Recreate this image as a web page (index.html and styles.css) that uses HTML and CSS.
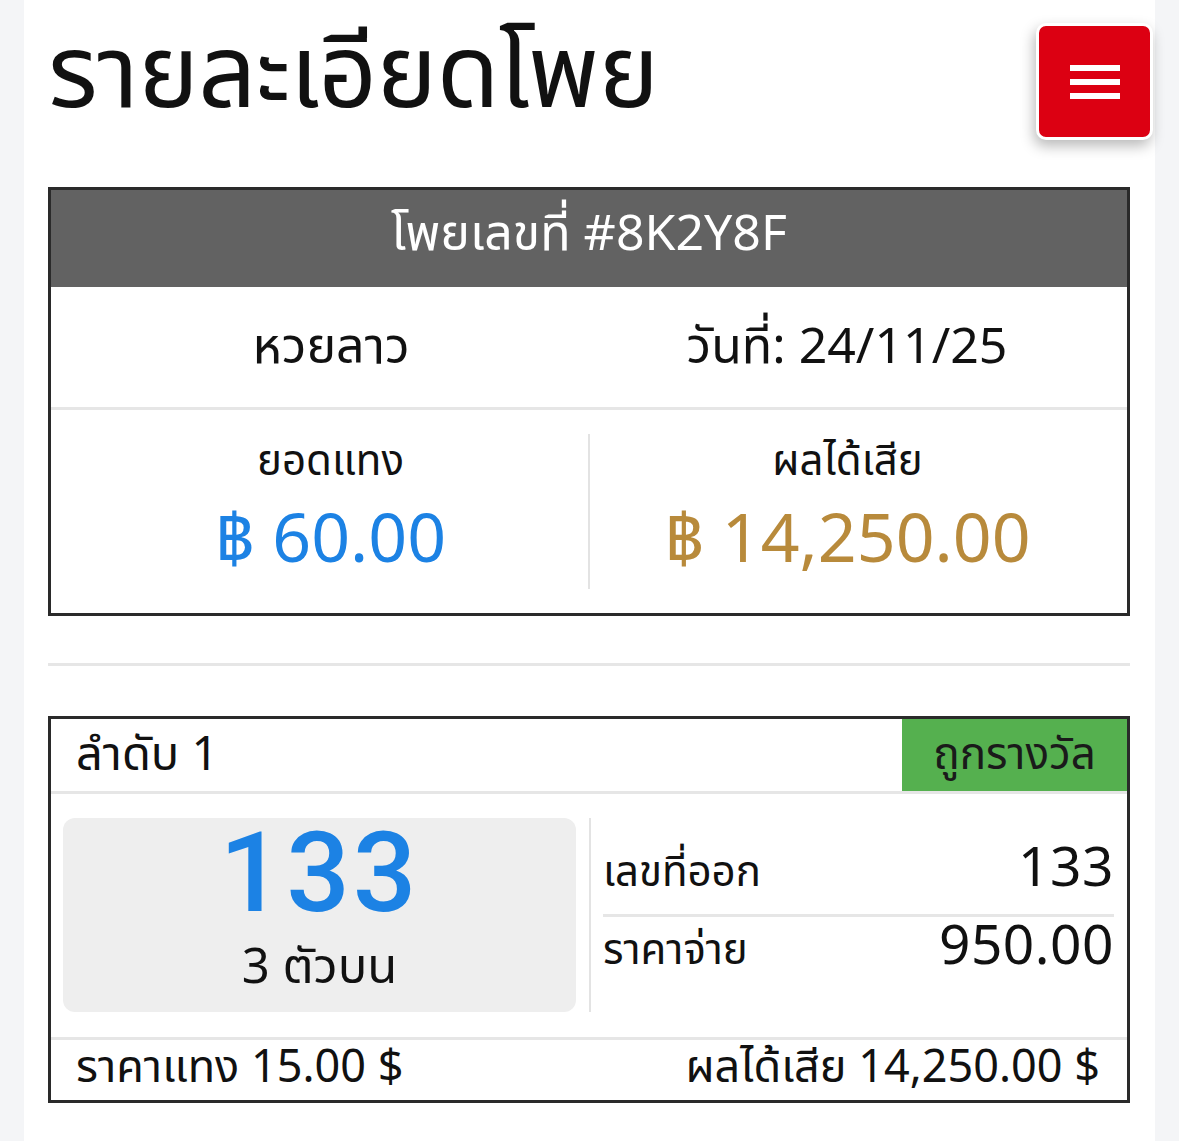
FILE: index.html
```html
<!DOCTYPE html>
<html lang="th">
<head>
    <meta charset="UTF-8">
    <meta name="viewport" content="width=device-width, initial-scale=1.0">
    <title>รายละเอียดโพย</title>
    <link rel="stylesheet" href="styles.css">
</head>
<body>
    <div class="page">
        <div class="top">
            <h1>รายละเอียดโพย</h1>
            <button class="menu-btn" aria-label="menu">
                <span></span><span></span><span></span>
            </button>
        </div>

        <div class="bill">
            <div class="bill-head">โพยเลขที่ #8K2Y8F</div>
            <div class="bill-row">
                <div class="cell">หวยลาว</div>
                <div class="cell">วันที่: 24/11/25</div>
            </div>
            <div class="bill-sum">
                <div class="sum">
                    <div class="sum-label">ยอดแทง</div>
                    <div class="sum-value blue">฿ 60.00</div>
                </div>
                <div class="sum">
                    <div class="sum-label">ผลได้เสีย</div>
                    <div class="sum-value gold">฿ 14,250.00</div>
                </div>
            </div>
        </div>

        <hr class="divider">

        <div class="item">
            <div class="item-head">
                <span class="item-no">ลำดับ 1</span>
                <span class="badge win">ถูกรางวัล</span>
            </div>
            <div class="item-body">
                <div class="number-box">
                    <div class="number">133</div>
                    <div class="type">3 ตัวบน</div>
                </div>
                <div class="result">
                    <div class="result-row">
                        <span>เลขที่ออก</span>
                        <span class="result-val">133</span>
                    </div>
                    <div class="result-row">
                        <span>ราคาจ่าย</span>
                        <span class="result-val">950.00</span>
                    </div>
                </div>
            </div>
            <div class="item-foot">
                <span>ราคาแทง 15.00 $</span>
                <span>ผลได้เสีย 14,250.00 $</span>
            </div>
        </div>
    </div>
</body>
</html>
```

FILE: styles.css
```css
body {
    margin: 0;
    background: #f4f5f7;
    font-family: "Noto Sans Thai", "Noto Sans", sans-serif;
    color: #111;
}
.page {
    width: 1131px;
    margin: 0 0 0 24px;
    background: #fff;
    min-height: 1141px;
    padding: 0 25px 0 24px;
    box-sizing: border-box;
}
.top {
    display: flex;
    justify-content: space-between;
    align-items: flex-start;
    height: 187px;
}
h1 {
    margin: 6px 0 0 0;
    font-size: 102px;
    font-weight: 400;
    line-height: 140px;
    letter-spacing: -0.5px;
    white-space: nowrap;
}
.menu-btn {
    margin: 23px -23px 0 0;
    width: 117px;
    height: 117px;
    background: #dc0012;
    border: 3px solid #fff;
    border-radius: 10px;
    box-shadow: -2px 6px 14px rgba(0, 0, 0, 0.28);
    display: flex;
    flex-direction: column;
    justify-content: center;
    align-items: center;
    gap: 8px;
    padding: 0;
}
.menu-btn span {
    display: block;
    width: 50px;
    height: 6px;
    background: #fff;
}
.bill, .item {
    border: 3px solid #2a2a2a;
}
.bill-head {
    background: #626262;
    color: #fff;
    text-align: center;
    font-size: 50px;
    height: 97px;
    line-height: 90px;
}
.bill-row {
    display: flex;
    height: 120px;
    align-items: center;
    border-bottom: 3px solid #e6e6e6;
    font-size: 50px;
    padding: 0 22px;
}
.cell {
    flex: 1;
    text-align: center;
    padding-top: 2px;
}
.bill-sum {
    display: flex;
    padding: 24px 22px;
}
.sum {
    flex: 1;
    text-align: center;
    height: 155px;
}
.sum + .sum {
    border-left: 2px solid #e3e3e3;
}
.sum-label {
    font-size: 42px;
    line-height: 56px;
}
.sum-value {
    font-size: 68px;
    line-height: 90px;
    margin-top: 7px;
}
.blue { color: #1c82e4; }
.gold { color: #b88a3b; }
.divider {
    border: 0;
    border-top: 3px solid #e6e6e6;
    margin: 47px 0 50px;
}
.item-head {
    display: flex;
    justify-content: space-between;
    align-items: center;
    height: 72px;
    border-bottom: 3px solid #e6e6e6;
    font-size: 47px;
}
.item-no {
    padding-left: 25px;
}
.badge {
    align-self: stretch;
    display: flex;
    align-items: center;
    justify-content: center;
    width: 225px;
    font-size: 44px;
    white-space: nowrap;
}
.win {
    background: #55b04f;
    color: #1a1a1a;
}
.item-body {
    display: flex;
    padding: 24px 13px 25px 12px;
    border-bottom: 3px solid #e6e6e6;
}
.number-box {
    width: 513px;
    height: 194px;
    background: #eeeeee;
    border-radius: 12px;
    text-align: center;
    margin-right: 13px;
}
.number {
    font-family: Roboto, "Noto Sans", sans-serif;
    font-size: 112px;
    font-weight: 500;
    letter-spacing: 3px;
    color: #1c82e4;
    line-height: 110px;
    margin-bottom: 8px;
}
.type {
    font-size: 49px;
    line-height: 64px;
}
.result {
    flex: 1;
    border-left: 2px solid #e3e3e3;
    padding: 21px 0 0 12px;
}
.result-row {
    display: flex;
    justify-content: space-between;
    align-items: baseline;
    font-size: 42px;
    height: 75px;
    line-height: 62px;
    box-sizing: border-box;
}
.result-row + .result-row {
    border-top: 3px solid #e6e6e6;
}
.result-val {
    font-size: 55px;
    letter-spacing: 0.5px;
}
.item-foot {
    display: flex;
    justify-content: space-between;
    align-items: center;
    height: 60px;
    padding: 0 27px 4px 25px;
    box-sizing: border-box;
    font-size: 45px;
}
```
